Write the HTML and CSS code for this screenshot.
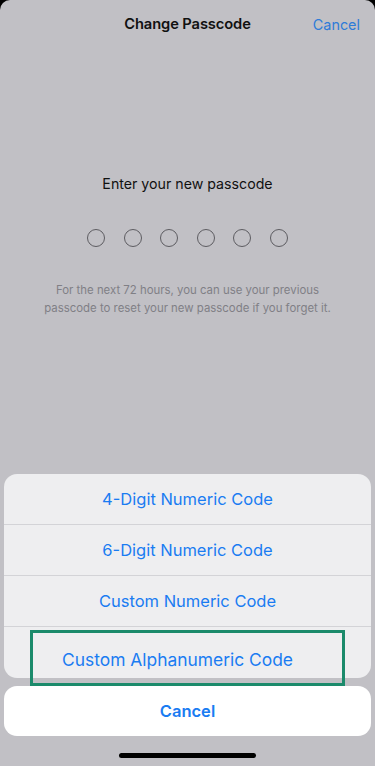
FILE: index.html
```html
<!DOCTYPE html>
<html lang="en">
<head>
<meta charset="utf-8">
<title>Change Passcode</title>
<link rel="stylesheet" href="styles.css">
</head>
<body>
<div class="screen">
  <header class="header">
    <span></span>
    <h1 class="title">Change Passcode</h1>
    <a class="header-cancel">Cancel</a>
  </header>
  <p class="prompt">Enter your new passcode</p>
  <div class="dots">
    <span class="dot"></span><span class="dot"></span><span class="dot"></span>
    <span class="dot"></span><span class="dot"></span><span class="dot"></span>
  </div>
  <p class="note">For the next 72 hours, you can use your previous<br>passcode to reset your new passcode if you forget it.</p>

  <div class="sheet-area">
    <div class="sheet">
      <div class="row">4-Digit Numeric Code</div>
      <div class="row">6-Digit Numeric Code</div>
      <div class="row">Custom Numeric Code</div>
      <div class="row row-alpha">
        <span class="alpha-text">Custom Alphanumeric Code</span>
        <span class="highlight"></span>
      </div>
    </div>
    <div class="cancel-btn">Cancel</div>
  </div>
  <div class="home-bar"><span class="home-indicator"></span></div>
</div>
</body>
</html>
```

FILE: styles.css
```css
html, body {
  margin: 0;
  padding: 0;
  background: #000;
}

.screen {
  width: 375px;
  height: 766px;
  background: #c1c0c5;
  border-radius: 10px 10px 0 0;
  display: flex;
  flex-direction: column;
  font-family: Inter, "Noto Sans", "Liberation Sans", sans-serif;
  overflow: hidden;
}

.header {
  display: grid;
  grid-template-columns: 1fr auto 1fr;
  align-items: center;
  height: 48px;
  padding: 0 15px;
}

.title {
  margin: 0;
  font-size: 14.7px;
  font-weight: 600;
  color: #111;
  letter-spacing: -0.1px;
}

.header-cancel {
  justify-self: end;
  font-size: 14.4px;
  color: #2e7bd8;
}

.prompt {
  margin: 126px 0 0;
  height: 20px;
  line-height: 20px;
  text-align: center;
  font-size: 14.2px;
  color: #111;
}

.dots {
  margin-top: 35px;
  display: flex;
  justify-content: center;
  gap: 18.5px;
}

.dot {
  width: 16px;
  height: 16px;
  border: 1.2px solid #5d5c61;
  border-radius: 50%;
}

.note {
  margin: 34px 0 0;
  text-align: center;
  font-size: 11.4px;
  line-height: 18px;
  color: #807f85;
}

.sheet-area {
  margin-top: auto;
  padding: 0 4px;
  display: flex;
  flex-direction: column;
  gap: 8px;
}

.sheet {
  background: #eeeef0;
  border-radius: 13px;
}

.row {
  height: 51px;
  box-sizing: border-box;
  display: flex;
  align-items: center;
  justify-content: center;
  font-size: 16.5px;
  color: #1a7cf2;
  border-bottom: 1px solid #d3d3d7;
}

.row-alpha {
  border-bottom: none;
  position: relative;
  padding: 14px 20px 0 0;
  font-size: 17.4px;
}

.highlight {
  position: absolute;
  left: 26px;
  top: 3px;
  width: 315px;
  height: 56px;
  box-sizing: border-box;
  border: 3px solid #1b8a6b;
  z-index: 2;
}

.cancel-btn {
  height: 50px;
  background: #fff;
  border-radius: 13px;
  display: flex;
  align-items: center;
  justify-content: center;
  font-size: 16.5px;
  font-weight: 600;
  color: #1a7cf2;
}

.home-bar {
  height: 30px;
  display: flex;
  justify-content: center;
  padding-top: 17px;
  box-sizing: border-box;
}

.home-indicator {
  width: 137px;
  height: 5px;
  border-radius: 3px;
  background: #000;
}
```
